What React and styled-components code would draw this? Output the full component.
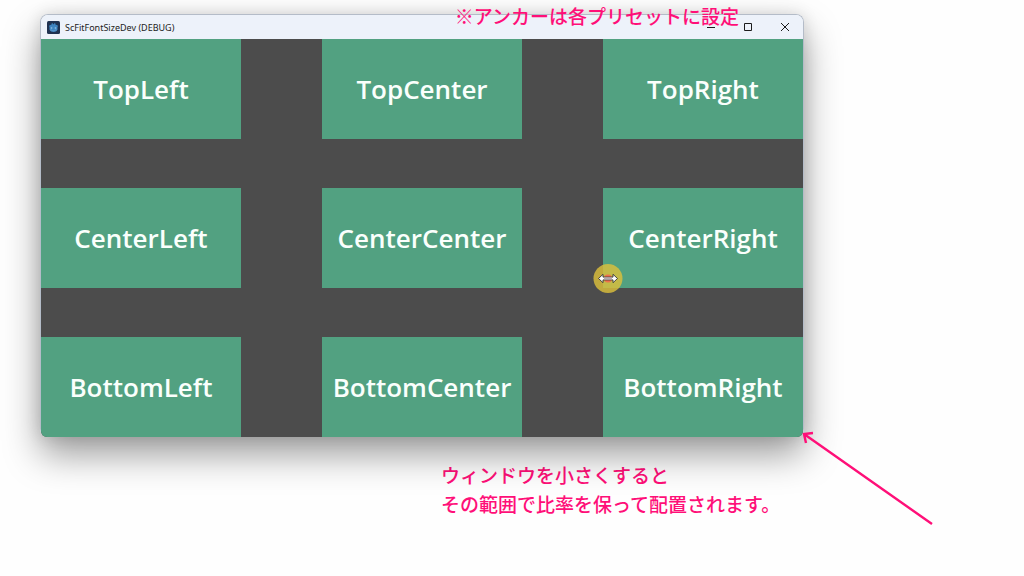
import React from 'react';
import styled, { createGlobalStyle } from 'styled-components'

const GlobalStyle = createGlobalStyle`
	body {
		margin: 0;
		background-color: #fefefe;
		font-family: "Open Sans", "Noto Sans CJK JP", sans-serif;
	}
`

const Page = styled.main`
	display: flex;
	flex-direction: column;
	gap: 23px;
	padding: 14px 220px 40px 40px;
`

const AppWindow = styled.section`
	position: relative;
	border: 1px solid #b4bcc8;
	border-bottom-width: 0;
	border-radius: 8px;
	box-shadow: 0 18px 36px rgba(0, 0, 0, 0.38), 0 0 16px rgba(0, 0, 0, 0.12);
`

const TitleBar = styled.header`
	display: flex;
	align-items: center;
	justify-content: space-between;
	height: 24px;
	padding-left: 6px;
	border-radius: 7px 7px 0 0;
	background-color: #edf2fa;
`

const Title = styled.h1`
	display: flex;
	align-items: center;
	gap: 5px;
	margin: 0;
	font-family: "Noto Sans", sans-serif;
	font-size: 9px;
	font-weight: 400;
	color: #1c1c1c;
`

const WindowButtons = styled.div`
	display: flex;
`

const WindowButton = styled.button`
	display: flex;
	align-items: center;
	justify-content: center;
	width: 37px;
	height: 24px;
	padding: 0;
	border: 0;
	background: none;
	color: #1c1c1c;
`

const Stage = styled.div`
	display: grid;
	grid-template-columns: repeat(3, minmax(0, 200px));
	grid-auto-rows: 100px;
	justify-content: space-between;
	row-gap: 49px;
	border-radius: 0 0 6px 6px;
	background-color: #4c4c4c;
	overflow: hidden;
`

const Tile = styled.div`
	display: flex;
	align-items: center;
	justify-content: center;
	background-color: #52a181;
	color: #fafffc;
	font-size: 26px;
	font-weight: 600;
`

const Note = styled.p`
	margin: 0;
	color: #ff0f78;
	font-family: "Noto Sans CJK JP", sans-serif;
	font-size: 19px;
	font-weight: 500;
	line-height: 29px;
	white-space: nowrap;
`

const TopNote = styled(Note)`
	position: absolute;
	top: -14px;
	right: 64px;
`

const BottomNote = styled(Note)`
	padding-left: 401px;
`

const CornerArrow = styled.svg`
	position: absolute;
	top: 100%;
	left: 100%;
	margin-top: -8px;
	margin-left: -2px;
`

const ResizeCursor = styled.svg`
	position: absolute;
	right: 180px;
	bottom: 143px;
`

const anchors = [
	'TopLeft', 'TopCenter', 'TopRight',
	'CenterLeft', 'CenterCenter', 'CenterRight',
	'BottomLeft', 'BottomCenter', 'BottomRight',
]

const AppIcon = () => (
	<svg width="13" height="13" viewBox="0 0 13 13" aria-hidden="true">
		<rect width="13" height="13" rx="1.5" fill="#1f3251" />
		<path d="M2 5 3.2 3.8 4.2 4.3 4.6 2.5 5.8 2.2 6.1 3.2H6.9L7.2 2.2 8.4 2.5 8.8 4.3 9.8 3.8 11 5 10.5 6V8.8Q9.5 11 6.5 11 3.5 11 2.5 8.8V6Z" fill="#3d84c0" />
		<circle cx="4.5" cy="7" r="0.9" fill="#7fb4dc" />
		<circle cx="8.5" cy="7" r="0.9" fill="#7fb4dc" />
		<path d="M3 9H5L5.5 9.8H7.5L8 9H10" fill="none" stroke="#6ca6d4" strokeWidth="0.6" />
	</svg>
)

const buttons = [
	{ label: 'Minimize', path: 'M1 5.5H9' },
	{ label: 'Maximize', path: 'M1.5 1.5H8.5V8.5H1.5Z' },
	{ label: 'Close', path: 'M1 1 9 9M9 1 1 9' },
]

const App = () => (
	<>
		<GlobalStyle />
		<Page>
			<AppWindow>
				<TitleBar>
					<Title><AppIcon />ScFitFontSizeDev (DEBUG)</Title>
					<WindowButtons>
						{buttons.map(({ label, path }) => (
							<WindowButton key={label} type="button" aria-label={label}>
								<svg width="10" height="10" viewBox="0 0 10 10">
									<path d={path} fill="none" stroke="currentColor" />
								</svg>
							</WindowButton>
						))}
					</WindowButtons>
				</TitleBar>
				<Stage>
					{anchors.map((name) => <Tile key={name}>{name}</Tile>)}
				</Stage>
				<TopNote>※アンカーは各プリセットに設定</TopNote>
				<ResizeCursor width="30" height="30" viewBox="0 0 30 30" aria-hidden="true">
					<circle cx="15" cy="14.5" r="14.5" fill="#dcc03c" fillOpacity="0.82" />
					<circle cx="15" cy="14.5" r="4" fill="#f0704c" />
					<path d="M5.5 14.5 10 10.3V13.1H20V10.3L24.5 14.5 20 18.7V15.9H10V18.7Z" fill="#fff" stroke="#333" strokeWidth="0.9" />
					<path d="M11 13.5H19V15.5H11Z" fill="#b8a8a8" />
				</ResizeCursor>
				<CornerArrow width="136" height="100" viewBox="0 0 136 100" aria-hidden="true">
					<path d="M3 5 131 95M12 4 3 5 5 14" fill="none" stroke="#ff0f78" strokeWidth="2.4" />
				</CornerArrow>
			</AppWindow>
			<BottomNote>
				ウィンドウを小さくすると<br />
				その範囲で比率を保って配置されます。
			</BottomNote>
		</Page>
	</>
)

export default App
